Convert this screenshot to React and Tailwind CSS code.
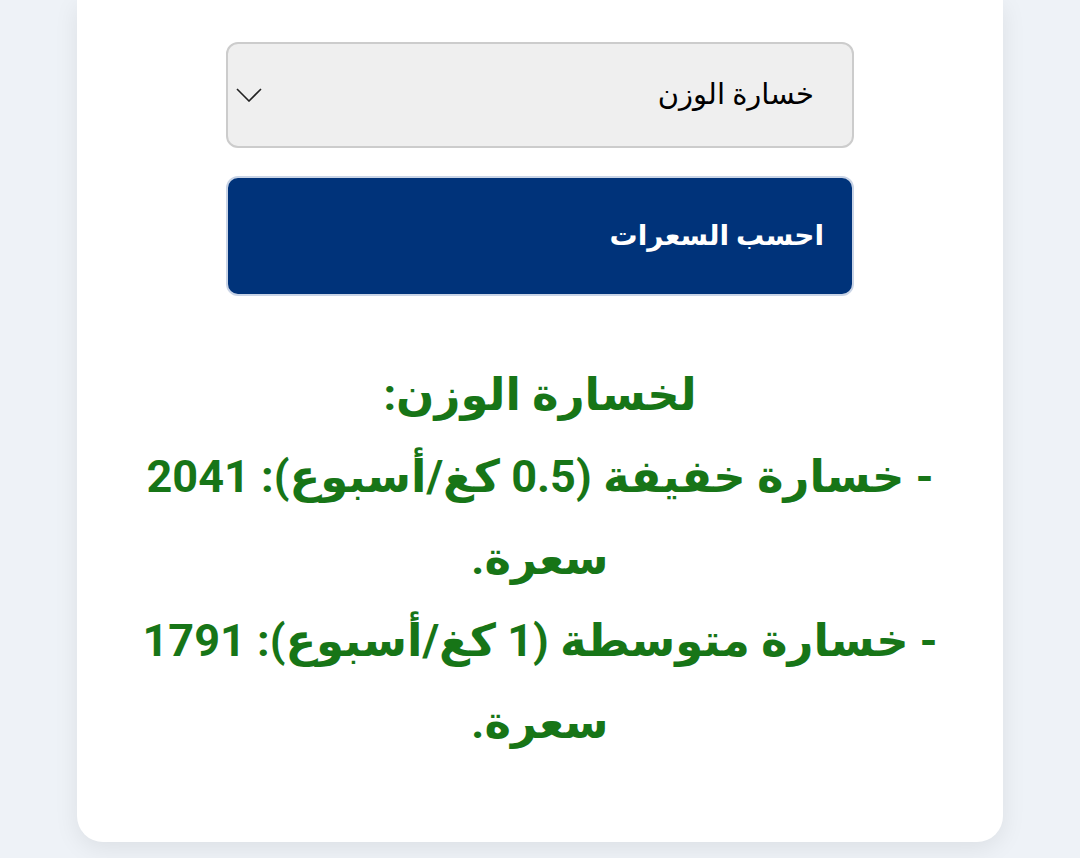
import React from "react";

const App = () => {
  return (
    <div
      dir="rtl"
      className="min-h-[858px] bg-[#eef2f7] flex justify-center"
      style={{ fontFamily: 'Roboto, "Noto Sans", "DejaVu Sans", sans-serif' }}
    >
      <div className="w-[926px] h-[842px] bg-white rounded-b-[26px] shadow-[0_6px_24px_rgba(0,0,0,0.08)] flex flex-col items-center pt-[42px]">
        <div className="w-[628px] flex flex-col gap-[28px]">
          <div className="h-[106px] bg-[#efefef] border-2 border-[#cccccc] rounded-[12px] flex items-center justify-between pr-[38px] pl-[6px]">
            <span className="text-[29px] text-black">خسارة الوزن</span>
            <svg width="26" height="14" viewBox="0 0 26 14" fill="none" className="ml-[2px]">
              <path d="M1 1 L13 13 L25 1" stroke="#222" strokeWidth="1.6" />
            </svg>
          </div>
          <button className="h-[120px] bg-[#00337a] border-2 border-[#c9d4e6] rounded-[12px] flex items-center pr-[28px] text-white text-[28px] font-bold">
            احسب السعرات
          </button>
        </div>

        <div className="mt-[58px] w-[806px] text-center text-[#177517] font-bold text-[45px] leading-[82px]">
          <div>لخسارة الوزن:</div>
          <div>- خسارة خفيفة (0.5 كغ/أسبوع): 2041</div>
          <div>سعرة.</div>
          <div>- خسارة متوسطة (1 كغ/أسبوع): 1791</div>
          <div>سعرة.</div>
        </div>
      </div>
    </div>
  );
};

export default App;
